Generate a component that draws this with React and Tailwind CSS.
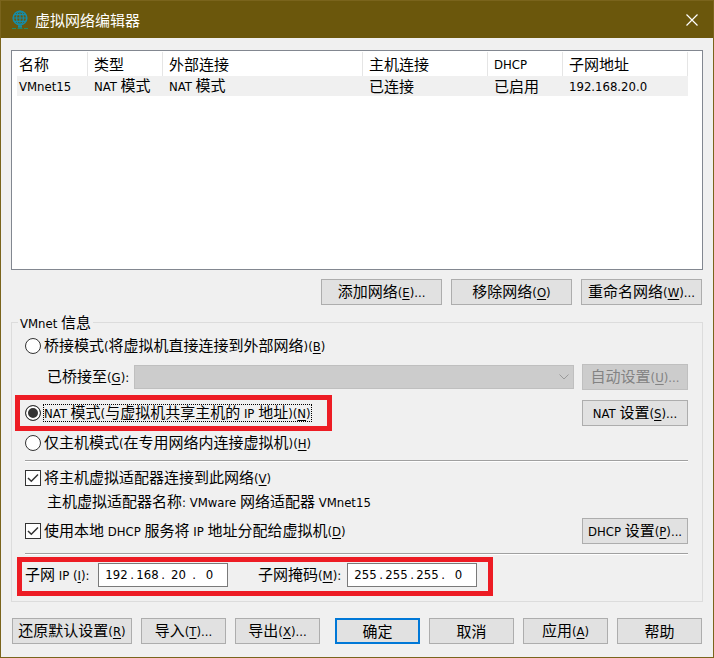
import React, { useState } from "react";

const columns = [
  { name: "名称", width: "w-[71px]" },
  { name: "类型", width: "w-[75px]" },
  { name: "外部连接", width: "w-[200px]" },
  { name: "主机连接", width: "w-[125px]" },
  { name: "DHCP", width: "w-[75px]" },
  { name: "子网地址", width: "w-[125px]" },
];

const networks = [
  ["VMnet15", "NAT 模式", "NAT 模式", "已连接", "已启用", "192.168.20.0"],
];

const LATIN = "font-['DejaVu_Sans_Condensed','Noto_Sans',sans-serif] text-[13px]";

// Latin runs use a smaller face than the Chinese text around them
const Text = ({ children, hotkey, tail = "" }) => (
  <span className="whitespace-pre">
    {children.split(/([\x20-\x7e]+)/).map((part, i) =>
      i % 2 ? (
        <span key={i} className={LATIN}>
          {part}
        </span>
      ) : (
        part
      )
    )}
    {hotkey && (
      <span className={LATIN}>
        (<u className="underline-offset-2">{hotkey}</u>){tail}
      </span>
    )}
  </span>
);

const Button = ({ className = "", primary, disabled, ...props }) => (
  <button
    type="button"
    disabled={disabled}
    className={`flex h-[26px] items-center justify-center bg-[#e1e1e1] leading-5 disabled:border-[#bfbfbf] disabled:bg-[#cccccc] disabled:text-[#838383] ${
      primary ? "border-2 border-[#0078d7]" : "border border-[#adadad]"
    } ${className}`}
  >
    <Text {...props} />
  </button>
);

const Radio = ({ value, mode, setMode, hotkey, children }) => (
  <label className="flex items-center gap-[3px]">
    <input
      type="radio"
      name="mode"
      checked={mode === value}
      onChange={() => setMode(value)}
      className="size-4 appearance-none rounded-full border border-[#333333] bg-white checked:bg-[#333333] checked:shadow-[inset_0_0_0_2px_white]"
    />
    <span
      className={`flex h-4 items-center ${
        mode === value ? "outline-1 outline-dotted outline-black" : ""
      }`}
    >
      <Text hotkey={hotkey}>{children}</Text>
    </span>
  </label>
);

const CheckBox = ({ hotkey, children }) => (
  <label className="flex items-center gap-[3px]">
    <span className="relative flex">
      <input
        type="checkbox"
        defaultChecked
        className="peer size-4 appearance-none border border-[#333333] bg-white"
      />
      <svg
        viewBox="0 0 16 16"
        className="pointer-events-none absolute inset-0 hidden size-4 peer-checked:block"
        fill="none"
        stroke="#333333"
        strokeWidth="1.5"
      >
        <path d="M3 8L6.3 11.2L13 4.5" />
      </svg>
    </span>
    <Text hotkey={hotkey}>{children}</Text>
  </label>
);

const AddressInput = ({ id, label, value }) => (
  <div
    role="group"
    aria-label={label}
    className={`flex h-6 w-[130px] items-center border border-[#7a7a7a] bg-white px-1 ${LATIN}`}
  >
    {value.split(".").map((octet, i) => (
      <React.Fragment key={i}>
        {i > 0 && <span className="w-1 text-center">.</span>}
        <input
          id={i === 0 ? id : undefined}
          aria-label={`${label} ${i + 1}`}
          defaultValue={octet}
          maxLength={3}
          className="w-full min-w-0 flex-1 text-center outline-none"
        />
      </React.Fragment>
    ))}
  </div>
);

const Highlight = ({ className }) => (
  <span
    className={`pointer-events-none absolute border-5 border-[#ed1c24] ${className}`}
  />
);

const Divider = () => <hr className="h-[2px] border-t border-[#a0a0a0] bg-white" />;

const GlobeIcon = () => (
  <svg viewBox="0 0 18 20" className="h-5 w-[18px]" fill="none" stroke="#168ca6">
    <circle cx="9" cy="8" r="6.8" strokeWidth="1.6" />
    <ellipse cx="9" cy="8" rx="3.4" ry="6.8" strokeWidth="1.2" />
    <path d="M3 4.6H15M2.2 8H15.8M3 11.4H15M9 1V15" strokeWidth="1.2" />
    <path d="M7 16.5H11" strokeWidth="2.4" />
    <path d="M1 18.5H5M6.5 18.5H11.5M13 18.5H17" stroke="#1f8a6a" />
  </svg>
);

const App = () => {
  const [mode, setMode] = useState("nat");

  return (
    <div className="border border-t-0 border-[#7a641c] bg-[#f0f0f0] font-['Noto_Sans_CJK_SC',sans-serif] text-[15px] leading-5 text-black">
      <header className="flex h-[38px] items-center border-t border-[#7a641c] bg-[#6b570c] pr-[15px] pl-[10px] text-white">
        <GlobeIcon />
        <h1 className="ml-[6px] flex-1">虚拟网络编辑器</h1>
        <button type="button" aria-label="关闭">
          <svg viewBox="0 0 12 12" className="size-3" stroke="white" strokeWidth="1.2">
            <path d="M0.5 0.5L11.5 11.5M11.5 0.5L0.5 11.5" />
          </svg>
        </button>
      </header>

      <main className="px-[10px] pt-3 pb-[13px]">
        <div className="h-[220px] border border-[#828790] bg-white pt-px pl-[5px]">
          <table className="table-fixed border-separate border-spacing-0 text-left leading-4">
            <thead>
              <tr className="h-6">
                {columns.map((col, i) => (
                  <th
                    key={col.name}
                    className={`border-r border-[#e5e5e5] p-0 font-normal ${col.width} ${
                      i === 0 ? "pl-[2px]" : "pl-[6px]"
                    }`}
                  >
                    <Text>{col.name}</Text>
                  </th>
                ))}
              </tr>
            </thead>
            <tbody>
              {networks.map((row) => (
                <tr key={row[0]} className="h-5 bg-[#f0f0f0]">
                  {row.map((cell, i) => (
                    <td key={i} className={`p-0 ${i === 0 ? "pl-[2px]" : "pl-[6px]"}`}>
                      <Text>{cell}</Text>
                    </td>
                  ))}
                </tr>
              ))}
            </tbody>
          </table>
        </div>

        <div className="mt-[9px] flex justify-end gap-[9px] px-px">
          <Button className="w-[121px]" hotkey="E" tail="...">添加网络</Button>
          <Button className="w-[121px]" hotkey="O">移除网络</Button>
          <Button className="w-[121px]" hotkey="W" tail="...">重命名网络</Button>
        </div>

        <fieldset className="mt-[7px] border border-[#dcdcdc] pr-[14px] pb-[14px] pl-[13px]">
          <legend className="-ml-[7px] h-5 px-[2px]">
            <Text>VMnet 信息</Text>
          </legend>

          <div className="flex h-7 items-center">
            <Radio value="bridged" mode={mode} setMode={setMode} hotkey="B">
              桥接模式(将虚拟机直接连接到外部网络)
            </Radio>
          </div>

          <div className="mt-1 flex items-center pl-[22px]">
            <label htmlFor="bridge" className="w-[87px]">
              <Text hotkey="G" tail=":">已桥接至</Text>
            </label>
            <div className="relative mr-2 flex flex-1">
              <select
                id="bridge"
                disabled
                className="h-6 w-full appearance-none border border-[#bfbfbf] bg-[#cccccc]"
              />
              <svg
                viewBox="0 0 10 6"
                className="pointer-events-none absolute top-[9px] right-[5px] h-[6px] w-[10px]"
                fill="none"
                stroke="#9a9a9a"
              >
                <path d="M0.5 0.5L5 5L9.5 0.5" />
              </svg>
            </div>
            <Button className="w-[106px]" disabled hotkey="U" tail="...">自动设置</Button>
          </div>

          <div className="relative mt-[10px] flex items-center justify-between">
            <Radio value="nat" mode={mode} setMode={setMode} hotkey="N">
              NAT 模式(与虚拟机共享主机的 IP 地址)
            </Radio>
            <Button className="w-[106px]" hotkey="S" tail="...">NAT 设置</Button>
            <Highlight className="-inset-y-[5px] -left-[10px] w-[317px]" />
          </div>

          <div className="mt-[7px] mb-[7px] flex h-5 items-center">
            <Radio value="host" mode={mode} setMode={setMode} hotkey="H">
              仅主机模式(在专用网络内连接虚拟机)
            </Radio>
          </div>

          <Divider />

          <div className="mt-[6px] flex h-5 items-center">
            <CheckBox hotkey="V">将主机虚拟适配器连接到此网络</CheckBox>
          </div>
          <p className="mt-[3px] h-5 pl-[22px]">
            <Text>主机虚拟适配器名称: VMware 网络适配器 VMnet15</Text>
          </p>
          <div className="mt-[7px] mb-[9px] flex items-center justify-between">
            <CheckBox hotkey="D">使用本地 DHCP 服务将 IP 地址分配给虚拟机</CheckBox>
            <Button className="w-[106px]" hotkey="P" tail="...">DHCP 设置</Button>
          </div>

          <Divider />

          <div className="relative mt-2 flex items-center">
            <label htmlFor="subnet-ip" className="w-[73px]">
              <Text hotkey="I" tail=":">子网 IP </Text>
            </label>
            <AddressInput id="subnet-ip" label="子网 IP" value="192.168.20.0" />
            <label htmlFor="subnet-mask" className="ml-[30px] w-[89px]">
              <Text hotkey="M" tail=":">子网掩码</Text>
            </label>
            <AddressInput id="subnet-mask" label="子网掩码" value="255.255.255.0" />
            <Highlight className="-top-[6px] -bottom-[9px] -left-2 w-[476px]" />
          </div>
        </fieldset>

        <footer className="mt-4 flex justify-between px-px">
          <div className="flex gap-[9px]">
            <Button className="w-[120px]" hotkey="R">还原默认设置</Button>
            <Button className="w-[85px]" hotkey="T" tail="...">导入</Button>
            <Button className="w-[85px]" hotkey="X" tail="...">导出</Button>
          </div>
          <div className="flex gap-[9px]">
            <Button className="w-[85px]" primary>确定</Button>
            <Button className="w-[85px]">取消</Button>
            <Button className="w-[85px]" hotkey="A">应用</Button>
            <Button className="w-[85px]">帮助</Button>
          </div>
        </footer>
      </main>
    </div>
  );
};

export default App;
